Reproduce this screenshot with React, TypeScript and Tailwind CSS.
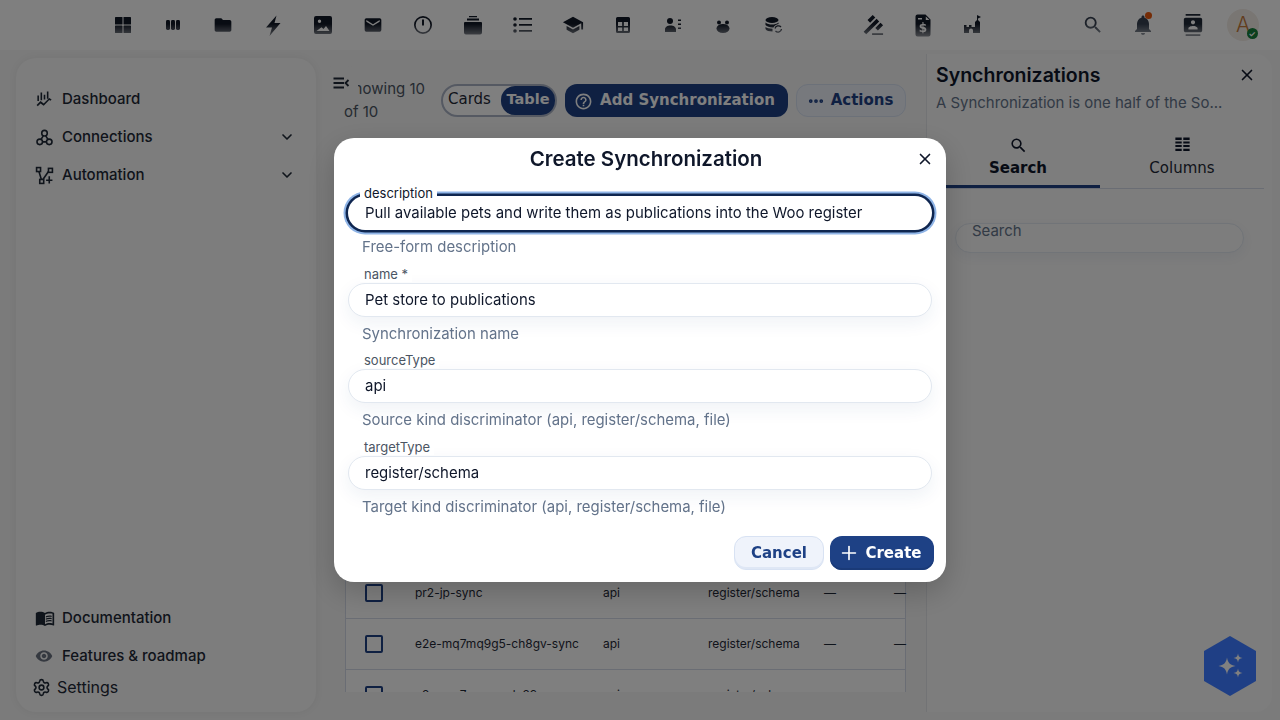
import { ChevronDown, Ellipsis, Plus, Settings, X } from "lucide-react";
import {
  MdContacts,
  MdFolder,
  MdGavel,
  MdMenuBook,
  MdNotifications,
  MdOutlineHelpOutline,
  MdRemoveRedEye,
  MdSchool,
  MdSearch,
} from "react-icons/md";
import type { ReactNode } from "react";

const sans = "font-['Inter','Noto_Sans',sans-serif]";
const dejavu = "font-['DejaVu_Sans',sans-serif]";

const Glyph = ({ children, size = 24 }: { children: ReactNode; size?: number }) => (
  <svg width={size} height={size} viewBox="0 0 24 24" fill="currentColor">
    {children}
  </svg>
);

const topLeft: ReactNode[] = [
  <Glyph>
    <rect x="4" y="4" width="7.5" height="7.5" rx="0.6" />
    <rect x="12.5" y="4" width="7.5" height="7.5" rx="0.6" />
    <rect x="4" y="12.5" width="7.5" height="7.5" rx="0.6" />
    <rect x="12.5" y="12.5" width="7.5" height="7.5" rx="0.6" />
  </Glyph>,
  <Glyph>
    <rect x="5" y="7" width="4" height="10" rx="1.4" />
    <rect x="10" y="7" width="4" height="10" rx="1.4" />
    <rect x="15" y="7" width="4" height="10" rx="1.4" />
  </Glyph>,
  <MdFolder size={20} />,
  <Glyph><path d="M15.5 2.5L5 14.5h6L8.5 23l11-13h-6Z" /></Glyph>,
  <Glyph><path fillRule="evenodd" d="M5 3h14a2 2 0 0 1 2 2v14a2 2 0 0 1-2 2H5a2 2 0 0 1-2-2V5a2 2 0 0 1 2-2Zm3.5 3.500a1.700 1.700 0 1 0 0 3.400 1.700 1.700 0 0 0 0-3.400ZM5.500 18h13l-3.500-5-2.500 3-2-1.800Z" /></Glyph>,
  <Glyph size={20}><path d="M20 8L12 13L4 8V6L12 11L20 6M20 4H4C2.890 4 2 4.890 2 6V18A2 2 0 0 0 4 20H20A2 2 0 0 0 22 18V6C22 4.890 21.100 4 20 4Z" /></Glyph>,
  <Glyph><path fillRule="evenodd" d="M12 3a9 9 0 1 1 0 18 9 9 0 0 1 0-18Zm0 1.700a7.300 7.300 0 1 0 0 14.600 7.300 7.300 0 0 0 0-14.600ZM11 6.500h2v6h-2Z" /></Glyph>,
  <Glyph><path d="M8 3h8v1.200H8ZM6 5.500h12v2H6ZM4 9h16a1 1 0 0 1 1 1V19.500a2 2 0 0 1-2 2H5a2 2 0 0 1-2-2V10a1 1 0 0 1 1-1Z" /></Glyph>,
  <Glyph>
    <path d="M8 5H21V6.800H8ZM8 11H21V12.800H8ZM8 17H21V18.800H8Z" />
    <circle cx="4" cy="6" r="1.8" />
    <circle cx="4" cy="12" r="1.8" />
    <circle cx="4" cy="18" r="1.8" />
  </Glyph>,
  <MdSchool size={22} />,
  <Glyph><path fillRule="evenodd" d="M6.500 4h11A1.500 1.500 0 0 1 19 5.500v13a1.500 1.500 0 0 1-1.500 1.500h-11A1.500 1.500 0 0 1 5 18.500v-13A1.500 1.500 0 0 1 6.500 4ZM7 9v4h4.200V9Zm5.800 0v4H17V9ZM7 14.500V18h4.200v-3.500Zm5.800 0V18H17v-3.500Z" /></Glyph>,
  <Glyph>
    <circle cx="9" cy="8" r="3" />
    <path d="M4 19v-2.500c0-2.500 2.500-4 5.500-4s5.500 1.500 5.500 4V19ZM17 6.500h3V8h-3ZM17 10.500h3V12h-3ZM17 14.500h3V16h-3Z" />
  </Glyph>,
  <Glyph>
    <ellipse cx="12" cy="15.5" rx="6.5" ry="4.5" />
    <circle cx="8" cy="9.5" r="2" />
    <circle cx="16" cy="9.5" r="2" />
  </Glyph>,
  <Glyph>
    <ellipse cx="11" cy="7" rx="6.5" ry="3" />
    <path d="M4.500 9.500c1.500 1.500 4 2 6.500 2s5-.5 6.500-2V11c-2.500.5-4 1.500-5 3.500-3.500.2-6.500-.8-8-2.500ZM4.500 14c1.500 1 3.500 1.700 7 1.700v2.800c-3.500 0-6-.7-7-2.500Z" />
    <path d="M14 15.500a3.500 3.500 0 0 1 6-1.500M20.500 16a3.500 3.500 0 0 1-6 2" fill="none" stroke="currentColor" strokeWidth="1.3" />
  </Glyph>,
];

const topMiddle: ReactNode[] = [
  <MdGavel size={22} className="-scale-x-100" />,
  <div className="relative">
    <Glyph>
      <path fillRule="evenodd" d="M6.500 1.500h8l5 5v15a2 2 0 0 1-2 2h-11a2 2 0 0 1-2-2v-18a2 2 0 0 1 2-2ZM7 5v1.500h4V5Zm7.800-1.500V7H18.500Z" />
    </Glyph>
    <span className={`absolute inset-x-0 bottom-[1px] text-center text-[12px] leading-[15px] font-bold text-[#ffffff] ${dejavu}`}>$</span>
  </div>,
  <Glyph><path d="M3 20V12h2.500v2H8v-2h2.500v2H14V9l2-2V2l4 2-3 1.500V7l2 2v11h-7v-2.500a2 2 0 0 0-4 0V20Z" /></Glyph>,
];

const Navigation = ({ icon, label, chevron }: { icon: ReactNode; label: string; chevron?: boolean }) => (
  <div className="flex h-[38px] items-center pl-[19px] pr-[21px]">
    <span className="flex w-[27px] shrink-0 text-[#1f2937]">{icon}</span>
    <span className="flex-1 text-[15px] font-medium text-[#1f2937]">{label}</span>
    {chevron && <ChevronDown size={16} strokeWidth={2.5} className="text-[#1f2937]" />}
  </div>
);

const rows = [
  "sync-01",
  "sync-02",
  "sync-03",
  "sync-04",
  "sync-05",
  "sync-06",
  "sync-07",
  "pr2-jp-sync",
  "e2e-mq7mq9g5-ch8gv-sync",
  "e2e-mq7mzsus-da29s-sync",
];

const Field = ({
  label,
  value,
  help,
  focused,
}: {
  label: string;
  value: string;
  help: string;
  focused?: boolean;
}) => (
  <div className="pt-[24.5px]">
    <div className="relative">
      {focused ? (
        <div className="flex h-[34px] items-center rounded-full bg-[#ffffff] pl-[17px] pt-[1px] text-[14.95px] text-[#0f172a] shadow-[0_0_0_2.5px_#0f2650,0_0_0_4.5px_#8fb4e6]">
          {value}
        </div>
      ) : (
        <div className="flex h-[34px] items-center rounded-full border border-[#e2e8f0] bg-[#ffffff] pl-[16px] pt-[1px] text-[14.95px] text-[#0f172a] shadow-[0_6px_18px_rgba(30,65,133,0.07)]">
          {value}
        </div>
      )}
      <span
        className={
          focused
            ? "absolute left-[12px] top-[-11px] bg-[#ffffff] px-[4px] text-[13px] leading-[16px] text-[#0f172a]"
            : "absolute left-[12px] top-[-17px] bg-[#ffffff] px-[4px] text-[13px] leading-[16px] text-[#4b5563]"
        }
      >
        {label}
      </span>
    </div>
    <div className="pl-[14px] pt-[6px] text-[14.95px] leading-[22px] text-[#64748b]">{help}</div>
  </div>
);

export default function App() {
  return (
    <div className={`flex h-[720px] w-[1280px] flex-col overflow-hidden bg-[#f6f6f6] ${sans}`}>
      <header className="flex h-[50px] shrink-0 items-center bg-[#ffffff] pl-[98px]">
        <div className="flex h-full flex-1 items-center text-[#111827] [mask-image:linear-gradient(to_bottom,#000_24px,rgba(0,0,0,0.5)_36px)]">
          {topLeft.map((icon, i) => (
            <div key={i} className="flex w-[50px] justify-center">
              {icon}
            </div>
          ))}
          <div className="w-[50px]" />
          {topMiddle.map((icon, i) => (
            <div key={i} className="flex w-[50px] justify-center">
              {icon}
            </div>
          ))}
          <div className="flex-1" />
          <div className="flex w-[50px] justify-center text-[#374151]">
            <MdSearch size={22} />
          </div>
          <div className="flex w-[50px] justify-center text-[#374151]">
            <div className="relative">
              <MdNotifications size={24} />
              <span className="absolute right-[3px] top-[-1px] h-[7px] w-[7px] rounded-full bg-[#ea580c]" />
            </div>
          </div>
          <div className="flex w-[50px] justify-center text-[#1f2937]">
            <MdContacts size={22} />
          </div>
        </div>
        <div className="flex w-[62px] justify-start pl-[9px]">
          <div className="relative flex h-[32px] w-[32px] items-center justify-center rounded-full bg-[#f3ece6] text-[21px] font-light text-[#c47a3a]">
            A
            <span className="absolute bottom-[2px] right-[1.5px] flex h-[11px] w-[11px] items-center justify-center rounded-full bg-[#16803c] text-[8px] font-bold text-[#ffffff]">
              ✓
            </span>
          </div>
        </div>
      </header>

      <div className="flex min-h-0 flex-1 pb-[8px] pt-[8px]">
        <aside className="ml-[16px] flex w-[300px] shrink-0 flex-col justify-between rounded-[20px] bg-[#fafafa] pb-[13px] pt-[22px] shadow-[0_0_8px_rgba(0,0,0,0.06)]">
          <nav>
            <Navigation
              label="Dashboard"
              icon={
                <Glyph size={19}>
                  <path d="M7 3h2v10H7ZM11 6h2v6h-2ZM15 2h2v9h-2ZM3 7h2v7H3ZM2 19l5-5 4 3 7-7 3 2-1.500 1.500-1.500-1L11 20l-4-3-3.500 3.500Z" />
                </Glyph>
              }
            />
            <Navigation
              label="Connections"
              chevron
              icon={
                <svg width="19" height="19" viewBox="0 0 24 24" fill="none" stroke="currentColor" strokeWidth="2">
                  <circle cx="12" cy="6.5" r="3.5" />
                  <circle cx="6" cy="17.5" r="3.5" />
                  <circle cx="18" cy="17.5" r="3.5" />
                  <path d="M9.500 17.500h5M10.500 10l-3 4.500M13.500 10l3 4.500" />
                </svg>
              }
            />
            <Navigation
              label="Automation"
              chevron
              icon={
                <svg width="19" height="19" viewBox="0 0 24 24" fill="none" stroke="currentColor" strokeWidth="2">
                  <rect x="2" y="2" width="5" height="5" />
                  <rect x="17" y="3" width="5" height="5" />
                  <rect x="6" y="17" width="5" height="5" />
                  <path d="M5 7l3 10M10 17l7-10M18 13v9M14 18h8" />
                </svg>
              }
            />
          </nav>
          <div>
            <Navigation label="Documentation" icon={<MdMenuBook size={20} />} />
            <Navigation label="Features & roadmap" icon={<MdRemoveRedEye size={18} className="text-[#6b7280]" />} />
            <div className="flex h-[24px] items-center pl-[16px] text-[#1f2937]">
              <Settings size={19} className="mr-[6px]" />
              <span className="text-[16px]">Settings</span>
            </div>
          </div>
        </aside>

        <main className="relative flex h-[634px] w-[610px] shrink-0 flex-col overflow-hidden pl-[28px] pr-[20px] pt-[26px]">
          <div className="flex items-start">
            <p className="-mt-[7px] w-[97px] shrink-0 text-[15px] leading-[23px] text-[#4b5563]">Showing 10 of 10</p>
            <div className={`flex h-[33px] w-[116px] items-center rounded-full border-2 border-[#aab3c5] bg-[#ffffff] pl-[5px] text-[15px] text-[#1f2937] ${dejavu}`}>
              <span className="flex-1 pb-[3px]">Cards</span>
              <span className="flex h-[29px] w-[54px] items-center justify-center rounded-[14px] bg-[#1e4185] pb-[2px] text-[14.5px] font-bold text-[#ffffff]">Table</span>
            </div>
            <button className={`ml-[8px] flex h-[33px] w-[223px] items-center justify-center gap-[7px] rounded-[12px] bg-[#1e4185] pr-[4px] text-[15px] font-bold text-[#ffffff] ${dejavu}`}>
              <MdOutlineHelpOutline size={19} className="mt-[1px]" />
              Add Synchronization
            </button>
            <button className={`ml-[8px] flex h-[33px] w-[110px] items-center justify-center gap-[6px] rounded-[12px] border border-[#d8e2f3] bg-[#eff3fb] pr-[2px] text-[15px] font-bold text-[#1e4185] ${dejavu}`}>
              <Ellipsis size={18} strokeWidth={3} />
              Actions
            </button>
          </div>
          <div className="ml-[1px] mt-[36px] w-[561px] border border-[#d5dbe8] bg-[#ffffff]">
            <div className="h-[50px]" />
            {rows.map((name) => (
              <div key={name} className="flex h-[51px] items-center border-t border-[#d5dbe8] text-[12px] text-[#1f2937]">
                <span className="ml-[19px] h-[18px] w-[18px] shrink-0 rounded-[2px] border-2 border-[#1e4185]" />
                <span className="ml-[32px] w-[188px] shrink-0">{name}</span>
                <span className="w-[105px] shrink-0">api</span>
                <span className="w-[116px] shrink-0">register/schema</span>
                <span className="w-[70px] shrink-0">—</span>
                <span className="shrink-0">—</span>
              </div>
            ))}
          </div>
          <div className="absolute left-[8px] top-[8px] flex h-[34px] w-[34px] items-center justify-center rounded-[10px] bg-[#f6f6f6] text-[#1f2937]">
            <svg width="18" height="18" viewBox="0 0 24 24" fill="none" stroke="currentColor" strokeWidth="2.4">
              <path d="M2 6h14M2 12h14M2 18h14M22 8l-4 4 4 4" />
            </svg>
          </div>
        </main>

        <section className="-mt-[4px] w-[346px] shrink-0 rounded-r-[16px] border-l border-[#e5e7eb] bg-[#fafafa] pl-[9px] pr-[8px] pt-[7px]">
          <div className="flex items-center justify-between pr-[8px]">
            <h2 className="text-[19.5px] font-semibold leading-[28px] text-[#0f172a]">Synchronizations</h2>
            <X size={18} strokeWidth={2.2} className="text-[#0f172a]" />
          </div>
          <p className="mt-[2px] text-[14.95px] leading-[24px] text-[#64748b]">A Synchronization is one half of the So...</p>
          <div className={`mt-[21px] flex w-[328px] border-b border-[#d5dbe8] ${dejavu}`}>
            <div className="-mb-px flex h-[52px] w-[164px] flex-col items-center border-b-[3px] border-[#1e4185]">
              <MdSearch size={19} className="mb-[2px] text-[#0f172a]" />
              <span className="text-[15px] font-bold leading-[22px] text-[#0f172a]">Search</span>
            </div>
            <div className="flex h-[52px] w-[164px] flex-col items-center">
              <svg width="19" height="19" viewBox="0 0 24 24" fill="#0f172a" className="mb-[2px]">
                <path d="M3 2h8v3H3ZM13 2h8v3h-8ZM3 7h8v2.500H3ZM13 7h8v2.500h-8ZM3 11.500h8V14H3ZM13 11.500h8V14h-8ZM3 16h8v3H3ZM13 16h8v3h-8Z" />
              </svg>
              <span className="text-[15px] leading-[22px] text-[#1f2937]">Columns</span>
            </div>
          </div>
          <div className="ml-[19px] mt-[34px] h-[30px] w-[289px] rounded-full border border-[#e2e8f0] bg-[#fafafa] pl-[16px] text-[14.95px] leading-[14px] text-[#64748b] shadow-[0_4px_12px_rgba(30,65,133,0.06)]">
            Search
          </div>
        </section>
      </div>

      <div className="fixed inset-0 flex items-center justify-center bg-[#000000]/50">
        <div className="flex h-[444px] w-[612px] flex-col rounded-[20px] bg-[#ffffff] px-[14px] pt-[8px] shadow-[0_10px_30px_rgba(0,0,0,0.2)]">
          <div className="flex h-[26px] items-center">
            <div className="flex-1 pl-[28px] text-center text-[20.5px] font-semibold text-[#0f172a]">Create Synchronization</div>
            <X size={18} strokeWidth={2.2} className="mr-[-2px] text-[#0f172a]" />
          </div>
          <div className="-mt-[0.5px]">
            <Field focused label="description" value="Pull available pets and write them as publications into the Woo register" help="Free-form description" />
            <Field label="name *" value="Pet store to publications" help="Synchronization name" />
            <Field label="sourceType" value="api" help="Source kind discriminator (api, register/schema, file)" />
            <Field label="targetType" value="register/schema" help="Target kind discriminator (api, register/schema, file)" />
          </div>
          <div className={`-mr-[2px] mt-[18.5px] flex justify-end gap-[6px] ${dejavu}`}>
            <button className="h-[34px] w-[90px] rounded-[12px] border border-[#d8e2f3] bg-[#eff3fb] text-[15px] font-bold text-[#1e4185] shadow-[inset_0_-2px_0_#dfe7f5]">Cancel</button>
            <button className="flex h-[34px] w-[104px] items-center justify-center gap-[5px] rounded-[12px] bg-[#1e4185] pr-[4px] text-[15px] font-bold text-[#ffffff] shadow-[inset_0_-2px_0_#1a3a78]">
              <Plus size={22} strokeWidth={1.8} />
              Create
            </button>
          </div>
        </div>
      </div>

      <div className="fixed bottom-[24px] right-[24px]">
        <svg width="52" height="60" viewBox="0 0 52 60">
          <path d="M26 0L52 15V45L26 60L0 45V15Z" fill="#1f3f85" />
          <path d="M23 21.500c1 5.500 3 7.500 8.500 8.500-5.500 1-7.500 3-8.500 8.500-1-5.500-3-7.500-8.500-8.500 5.500-1 7.500-3 8.500-8.500ZM34 17.500c.5 3 1.500 4 4.500 4.500-3 .5-4 1.500-4.500 4.500-.5-3-1.500-4-4.500-4.500 3-.5 4-1.500 4.500-4.500ZM34 32.500c.5 3 1.500 4 4.500 4.500-3 .5-4 1.500-4.500 4.500-.5-3-1.500-4-4.500-4.500 3-.5 4-1.500 4.500-4.500Z" fill="#808080" />
        </svg>
      </div>
    </div>
  );
}
